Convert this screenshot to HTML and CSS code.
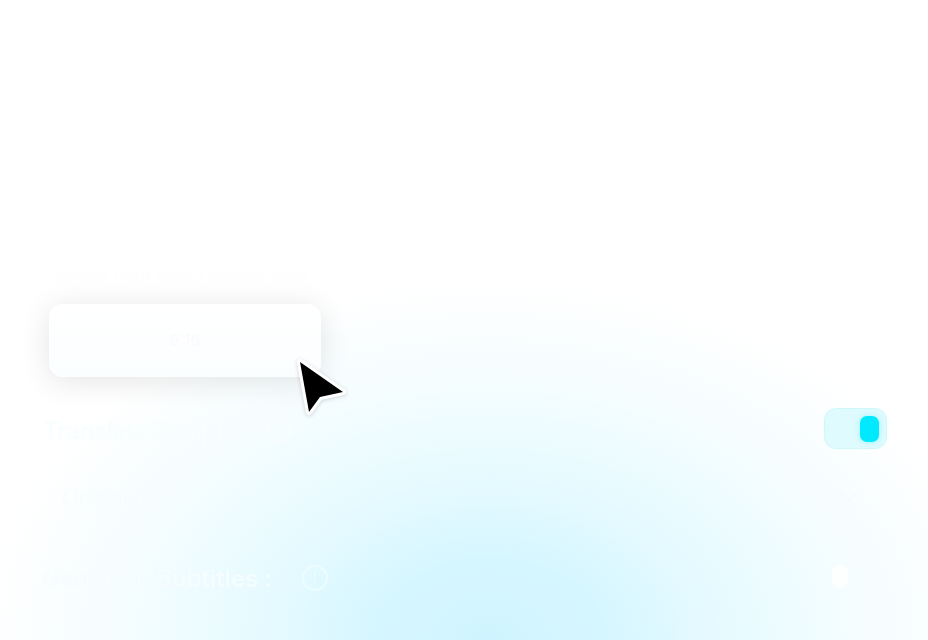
FILE: index.html
```html
<!DOCTYPE html>
<html lang="en">
<head>
<meta charset="utf-8">
<title>Video settings</title>
<link rel="stylesheet" href="styles.css">
</head>
<body>
<main class="panel">
  <p class="caption">Choose your video aspect ratio</p>
  <div class="ratios">
    <div class="ratio ratio-active">9:16</div>
    <div class="ratio">16:9</div>
    <div class="ratio">1:1</div>
  </div>
  <div class="row row-translate">
    <div class="label label-first"><span>Translate Script :</span><span class="info info-small">!</span></div>
    <div class="toggle"><span class="knob"></span></div>
  </div>
  <div class="row row-select">
    <span class="select-value">Original</span>
    <svg class="chevron" width="20" height="12" viewBox="0 0 20 12"><path d="M1 1l9 8 9-8" fill="none" stroke="#eefcfc" stroke-width="1"/></svg>
  </div>
  <div class="row row-subtitles">
    <div class="label label-strong"><span>Generate Subtitles :</span><span class="info">!</span></div>
    <span class="off-dot"></span>
  </div>
</main>
<svg class="cursor" width="56" height="64" viewBox="0 0 56 64">
  <path class="cursor-arrow" d="M5 5 L48 35 L25 40 L14 55 Z"/>
</svg>
</body>
</html>
```
FILE: styles.css
```css
* { box-sizing: border-box; }
html, body { margin: 0; height: 100%; }
body {
  width: 928px;
  height: 640px;
  overflow: hidden;
  position: relative;
  font-family: "Inter", "Liberation Sans", sans-serif;
  color: #fff;
  background: radial-gradient(ellipse 510px 360px at 490px 640px, #cff4ff 0%, #d6f6ff 22%, #e9fbff 50%, #f6fdff 75%, #ffffff 100%);
}
.panel { padding: 264px 41px 0 43px; display: flex; flex-direction: column; }
.caption { margin: 0; height: 24px; font-size: 18px; line-height: 24px; color: #fefefe; }
.ratios { margin: 16px 0 0 6px; display: flex; align-items: center; height: 73px; }
.ratio { width: 272px; text-align: center; font-size: 16px; color: #f9fefe; }
.ratio-active {
  height: 73px;
  line-height: 73px;
  background: linear-gradient(180deg, #ffffff, #fbfeff);
  border-radius: 14px;
  box-shadow: 0 4px 30px rgba(0, 0, 0, 0.11);
  color: #fcfafc;
}
.ratio:nth-child(2) { margin-left: 14px; width: 260px; }
.ratio:nth-child(3) { width: 120px; }
.row { display: flex; align-items: center; justify-content: space-between; }
.row-translate { margin-top: 31px; height: 41px; }
.row-select { margin-top: 28px; height: 40px; padding: 0 28px 0 19px; }
.row-subtitles { margin-top: 46px; height: 30px; padding-right: 39px; }
.label { display: flex; align-items: center; font-size: 24px; color: #fbfeff; text-shadow: 0 0 1px rgba(205, 245, 250, 0.35); }
.label-first { font-weight: 500; gap: 30px; margin-top: 3px; }
.label-strong { font-weight: 600; gap: 30px; color: rgba(255, 255, 255, 0.7); }
.info {
  width: 26px;
  height: 26px;
  border: 2px solid #ecfcff;
  border-radius: 50%;
  font-size: 15px;
  line-height: 22px;
  text-align: center;
  color: #ecfcff;
}
.info-small { width: 25px; height: 25px; line-height: 21px; border-color: #f8feff; color: #f8feff; }
.select-value { font-size: 22px; color: #fbfeff; text-shadow: 0 0 1px rgba(205, 245, 250, 0.35); }
.toggle {
  width: 63px;
  height: 41px;
  padding: 7px 7px 7px 0;
  display: flex;
  justify-content: flex-end;
  background: #e0fbfe;
  border: 1px solid #cff8fc;
  border-radius: 12px;
}
.knob { width: 19px; height: 26px; background: #00e9ff; border-radius: 7px; box-shadow: 0 0 7px rgba(0, 233, 255, 0.3); }
.off-dot { width: 16px; height: 23px; border-radius: 8px; background: #fdffff; margin-top: -3px; }
.cursor { position: absolute; left: 295px; top: 357px; filter: drop-shadow(0 1px 2px rgba(0,0,0,0.16)); }
.cursor-arrow { fill: #000; stroke: #fff; stroke-width: 6px; stroke-linejoin: round; paint-order: stroke; }
```
